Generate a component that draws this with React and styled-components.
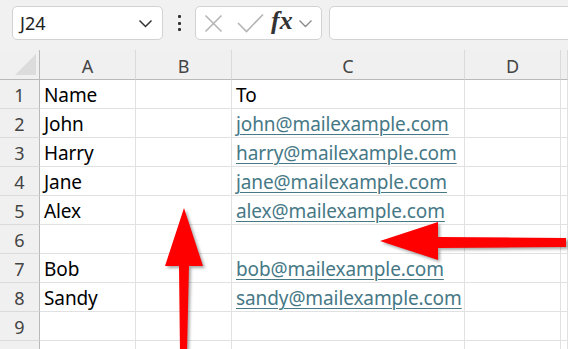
import React from "react";
import styled, { createGlobalStyle } from "styled-components";

const Global = createGlobalStyle`
  html, body { margin: 0; padding: 0; background: #f0f0f0; }
  body { font-family: "Noto Sans", "Open Sans", sans-serif; }
`;

const Page = styled.div`
  position: relative;
  width: 568px;
  height: 349px;
  overflow: hidden;
  background: #f0f0f0;
`;

const Toolbar = styled.div`
  height: 50px;
  box-sizing: border-box;
  padding: 6px 0 10px 12px;
  display: flex;
  align-items: stretch;
  background: #f1f1f1;
`;

const NameBox = styled.div`
  width: 151px;
  box-sizing: border-box;
  background: #fff;
  border: 1px solid #d2d2d2;
  border-radius: 5px;
  display: flex;
  align-items: center;
  justify-content: space-between;
  padding: 0 9px 0 7px;
  font-size: 18px;
  color: #222;
`;

const Dots = styled.div`
  width: 32px;
  display: flex;
  flex-direction: column;
  align-items: center;
  justify-content: center;
  gap: 3.5px;
  & > span {
    width: 3px;
    height: 3px;
    background: #333;
    border-radius: 1px;
  }
`;

const FxBox = styled.div`
  width: 127px;
  box-sizing: border-box;
  background: #fff;
  border: 1px solid #d2d2d2;
  border-radius: 5px;
  display: flex;
  align-items: center;
  padding: 0 0 0 8px;
`;

const Fx = styled.span`
  font-family: "Liberation Serif", "DejaVu Serif", serif;
  font-style: italic;
  font-weight: 600;
  font-size: 26px;
  color: #333;
  margin: -4px 5px 0 7px;
`;

const FormulaInput = styled.div`
  flex: 1;
  margin-left: 7px;
  margin-right: -10px;
  background: #fff;
  border: 1px solid #d2d2d2;
  border-radius: 5px;
`;

const Sheet = styled.div`
  display: grid;
  grid-template-columns: 40px 96px 96px 233px 96px 1fr;
  grid-auto-rows: 29px;
  grid-template-rows: 30px;
  background: #fff;
`;

const Corner = styled.div`
  background: #f0f0f0;
  border-right: 1px solid #b9b9b9;
  border-bottom: 1px solid #b9b9b9;
  box-sizing: border-box;
  display: flex;
  align-items: flex-end;
  justify-content: flex-end;
  padding: 0 3px 4px 0;
`;

const ColHead = styled.div`
  background: #f0f0f0;
  box-sizing: border-box;
  border-right: 1px solid #dadada;
  border-bottom: 1px solid #b9b9b9;
  font-size: 18px;
  color: #444;
  text-align: center;
  line-height: 27px;
  padding-top: 3px;
`;

const RowHead = styled.div`
  background: #f0f0f0;
  box-sizing: border-box;
  border-right: 1px solid #b9b9b9;
  border-bottom: 1px solid #dadada;
  font-size: 18px;
  color: #444;
  text-align: center;
  line-height: 27px;
  padding-top: 2px;
`;

const Cell = styled.div`
  box-sizing: border-box;
  border-right: 1px solid #e1e1e1;
  border-bottom: 1px solid #e1e1e1;
  font-size: 19px;
  color: ${(p) => (p.$link ? "#467886" : "#000")};
  text-decoration: ${(p) => (p.$link ? "underline" : "none")};
  text-decoration-thickness: 1px;
  text-underline-offset: 3px;
  line-height: 27px;
  padding: 2px 0 0 4px;
  letter-spacing: -0.1px;
  white-space: nowrap;
`;

const Overlay = styled.svg`
  position: absolute;
  left: 0;
  top: 0;
  width: 568px;
  height: 349px;
  pointer-events: none;
  filter: drop-shadow(2px 2px 1.5px rgba(0, 0, 0, 0.35));
`;

const rows = [
  ["Name", "To"],
  ["John", "john@mailexample.com"],
  ["Harry", "harry@mailexample.com"],
  ["Jane", "jane@mailexample.com"],
  ["Alex", "alex@mailexample.com"],
  ["", ""],
  ["Bob", "bob@mailexample.com"],
  ["Sandy", "sandy@mailexample.com"],
  ["", ""],
  ["", ""],
];

export default function App() {
  return (
    <Page>
      <Global />
      <Toolbar>
        <NameBox>
          <span>J24</span>
          <svg width="15" height="9" viewBox="0 0 15 9">
            <path d="M1.5 1.5 L7.5 7.5 L13.5 1.5" fill="none" stroke="#333" strokeWidth="1.5" />
          </svg>
        </NameBox>
        <Dots>
          <span />
          <span />
          <span />
        </Dots>
        <FxBox>
          <svg width="19" height="19" viewBox="0 0 19 19">
            <path d="M1.5 1.5 L17.5 17.5 M17.5 1.5 L1.5 17.5" stroke="#b5b5b5" strokeWidth="1.6" fill="none" />
          </svg>
          <svg width="27" height="20" viewBox="0 0 27 20" style={{ marginLeft: 14 }}>
            <path d="M1 10 L9.5 18.5 L26 1.5" stroke="#b5b5b5" strokeWidth="1.6" fill="none" />
          </svg>
          <Fx>fx</Fx>
          <svg width="15" height="9" viewBox="0 0 15 9">
            <path d="M1.5 1.5 L7.5 7.5 L13.5 1.5" fill="none" stroke="#888" strokeWidth="1.3" />
          </svg>
        </FxBox>
        <FormulaInput />
      </Toolbar>
      <Sheet>
        <Corner>
          <svg width="21" height="21" viewBox="0 0 21 21">
            <path d="M21 0 L21 21 L0 21 Z" fill="#dcdcdc" />
          </svg>
        </Corner>
        {["A", "B", "C", "D", ""].map((c, i) => (
          <ColHead key={i}>{c}</ColHead>
        ))}
        {rows.map((r, i) => (
          <React.Fragment key={i}>
            <RowHead>{i < 9 ? i + 1 : ""}</RowHead>
            <Cell>{r[0]}</Cell>
            <Cell />
            <Cell $link={i > 0 && r[1] !== ""}>{r[1]}</Cell>
            <Cell />
            <Cell />
          </React.Fragment>
        ))}
      </Sheet>
      <Overlay viewBox="0 0 568 349">
        <polygon
          points="184,208 203,266 189,266 187,352 180,352 179,266 165,266"
          fill="#ff0000"
        />
        <polygon
          points="380,241 438,222 438,237 566,238 566,247 438,248 438,260"
          fill="#ff0000"
        />
      </Overlay>
    </Page>
  );
}
